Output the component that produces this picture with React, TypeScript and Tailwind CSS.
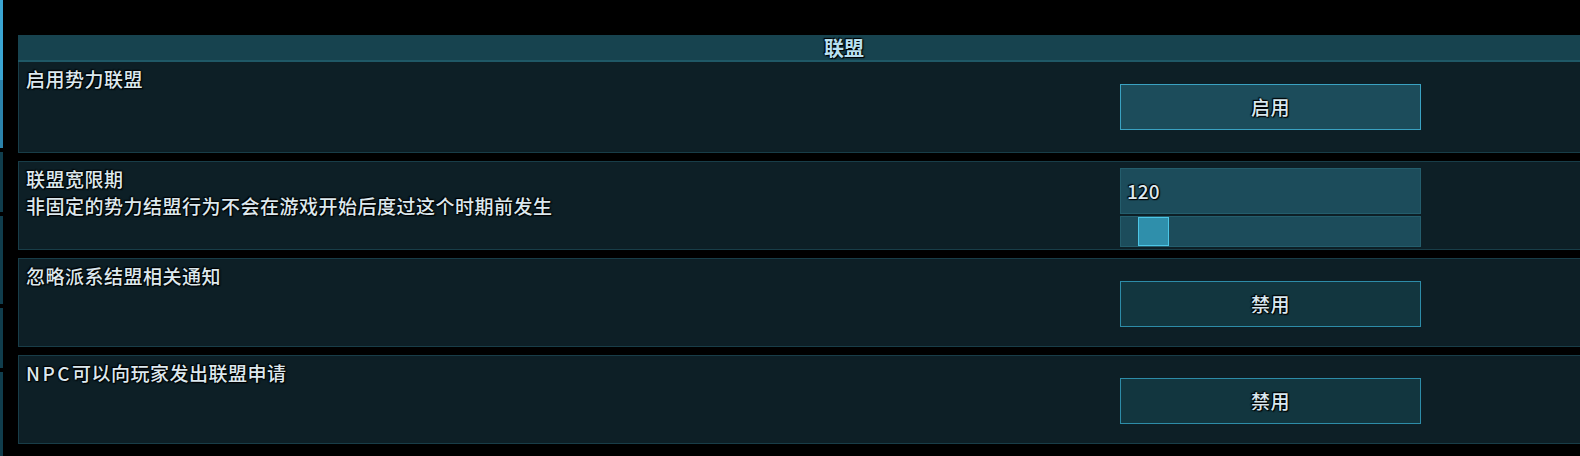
import React from "react"

const font = "font-['Noto_Sans_CJK_SC','Noto_Sans',sans-serif]"
const outline = "[text-shadow:0_0_2px_#000,0_0_2px_#000,1px_1px_1px_#000,-1px_-1px_1px_#000]"

type Setting = {
  title: string
  desc?: string
  kind: "toggle" | "slider"
  on?: boolean
  value?: number
}

const settings: Setting[] = [
  { title: "启用势力联盟", kind: "toggle", on: true },
  {
    title: "联盟宽限期",
    desc: "非固定的势力结盟行为不会在游戏开始后度过这个时期前发生",
    kind: "slider",
    value: 120,
  },
  { title: "忽略派系结盟相关通知", kind: "toggle", on: false },
  { title: "NPC可以向玩家发出联盟申请", kind: "toggle", on: false },
]

function ToggleButton({ on }: { on: boolean }) {
  return (
    <button
      className={`mt-[22px] h-[46px] w-[301px] border ${
        on ? "bg-[#1c4c5b] border-[#3aa2c2]" : "bg-[#12363f] border-[#2d8ca8]"
      } text-[19px] leading-[26px] font-medium tracking-[0.5px] text-[#d8e8ef] ${outline}`}
    >
      {on ? "启用" : "禁用"}
    </button>
  )
}

function SliderField({ value }: { value: number }) {
  return (
    <div className="mt-[6px] flex flex-col gap-[2px] w-[301px]">
      <div className={`h-[46px] bg-[#1c4c5b] border border-[#245d6c] flex items-center px-[6px] text-[19px] font-medium text-[#dce9ef] ${outline}`}>
        {value}
      </div>
      <div className="h-[31px] bg-[#1c4c5b] border border-[#245d6c] pl-[17px]">
        <div className="h-full w-[31px] bg-[#2f8fab] border border-[#4cc6e6]" />
      </div>
    </div>
  )
}

// latin prefix (NPC) is drawn wider spaced in the game font
function Title({ text }: { text: string }) {
  const m = text.match(/^([A-Za-z]+)(.*)$/)
  if (!m) return <div>{text}</div>
  return (
    <div>
      <span className="tracking-[2.5px]">{m[1]}</span>
      {m[2]}
    </div>
  )
}

function Row({ s, first }: { s: Setting; first?: boolean }) {
  return (
    <div
      className={`${first ? "h-[91px] border-t-0" : "h-[89px] mt-[8px]"} grid grid-cols-[1101px_301px_1fr] bg-[#0d1f26] border border-[#183d48]`}
    >
      <div className={`pl-[7px] pt-[3px] text-[19px] leading-[27px] font-medium tracking-[0.5px] text-[#dce8ee] ${outline}`}>
        <Title text={s.title} />
        {s.desc && <div>{s.desc}</div>}
      </div>
      <div>
        {s.kind === "toggle" ? <ToggleButton on={!!s.on} /> : <SliderField value={s.value ?? 0} />}
      </div>
      <div />
    </div>
  )
}

function Scrollbar() {
  return (
    <div className="w-[3px] h-full flex flex-col shrink-0">
      <div className="h-[80px] bg-[#3ba5d2]" />
      <div className="h-[68px] bg-[#2b83ab]" />
      <div className="h-[4px] bg-black" />
      <div className="h-[60px] bg-[#103d4c]" />
      <div className="h-[4px] bg-black" />
      <div className="h-[88px] bg-[#103d4c]" />
      <div className="h-[4px] bg-black" />
      <div className="h-[60px] bg-[#103d4c]" />
      <div className="h-[4px] bg-black" />
      <div className="flex-1 bg-[#103d4c]" />
    </div>
  )
}

export default function App() {
  return (
    <div className={`w-[1580px] h-[456px] bg-black overflow-hidden flex ${font}`}>
      <Scrollbar />
      <div className="ml-[15px] mt-[35px] w-[1652px] shrink-0">
        <div
          className={`h-[27px] bg-[#17434f] border-b-2 border-[#1f5866] flex items-center justify-center text-[20px] font-bold text-[#b8e0f1] ${outline}`}
        >
          联盟
        </div>
        {settings.map((s, i) => (
          <Row key={s.title} s={s} first={i === 0} />
        ))}
      </div>
    </div>
  )
}
